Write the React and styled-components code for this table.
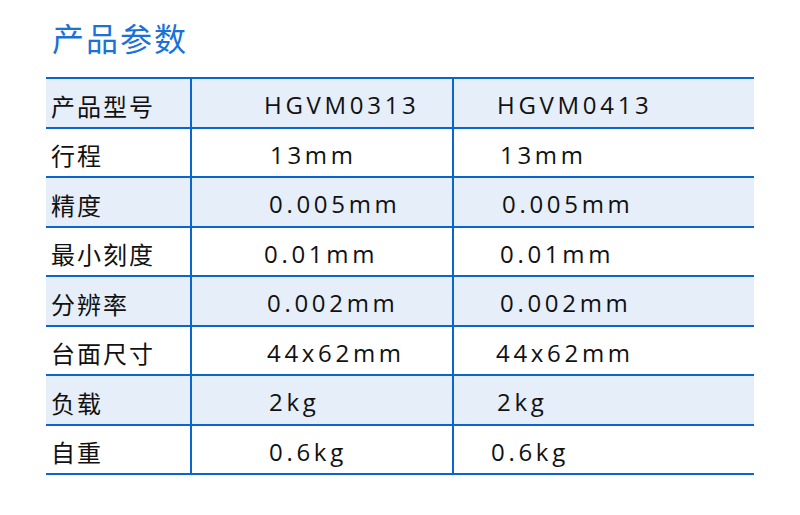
import React from 'react';
import styled, { createGlobalStyle } from 'styled-components';

const GlobalStyle = createGlobalStyle`
  html, body {
    margin: 0;
    padding: 0;
    background: #ffffff;
  }
  body {
    font-family: "Open Sans", "Noto Sans CJK SC", sans-serif;
  }
`;

const Page = styled.div`
  width: 800px;
  height: 515px;
  padding: 18px 46px 0 46px;
  box-sizing: border-box;
`;

const Title = styled.h1`
  margin: 0 0 0 6px;
  font-family: "Noto Sans CJK SC", sans-serif;
  font-weight: 400;
  font-size: 32px;
  line-height: 38px;
  color: #1a72d6;
  letter-spacing: 2px;
`;

const Table = styled.div`
  margin-top: 21px;
  width: 708px;
  border-top: 2px solid #0a66cc;
`;

const Row = styled.div`
  display: grid;
  grid-template-columns: 146px 262px 1fr;
  height: 49.5px;
  box-sizing: border-box;
  border-bottom: 2px solid #0a66cc;
  background: ${(p) => (p.$shaded ? '#e5eef9' : '#ffffff')};
`;

const Label = styled.div`
  display: flex;
  align-items: center;
  padding: 5px 0 0 5px;
  border-right: 2px solid #0a66cc;
  font-family: "Noto Sans CJK SC", sans-serif;
  font-size: 24px;
  letter-spacing: 2px;
  color: #111;
`;

const Value = styled.div`
  display: flex;
  align-items: center;
  padding: 4px 0 0 ${(p) => p.$indent}px;
  border-right: ${(p) => (p.$last ? 'none' : '2px solid #0a66cc')};
  font-family: "Open Sans", sans-serif;
  font-size: 24px;
  letter-spacing: 3.7px;
  color: #111;
`;

const rows = [
  ['产品型号', 'HGVM0313', 72, 'HGVM0413', 43],
  ['行程', '13mm', 78, '13mm', 46],
  ['精度', '0.005mm', 77, '0.005mm', 48],
  ['最小刻度', '0.01mm', 72, '0.01mm', 46],
  ['分辨率', '0.002mm', 75, '0.002mm', 46],
  ['台面尺寸', '44x62mm', 75, '44x62mm', 42],
  ['负载', '2kg', 77, '2kg', 43],
  ['自重', '0.6kg', 77, '0.6kg', 37],
];

export default function App() {
  return (
    <Page>
      <GlobalStyle />
      <Title>产品参数</Title>
      <Table>
        {rows.map(([label, a, ia, b, ib], i) => (
          <Row key={label} $shaded={i % 2 === 0}>
            <Label>{label}</Label>
            <Value $indent={ia}>{a}</Value>
            <Value $indent={ib} $last>{b}</Value>
          </Row>
        ))}
      </Table>
    </Page>
  );
}
